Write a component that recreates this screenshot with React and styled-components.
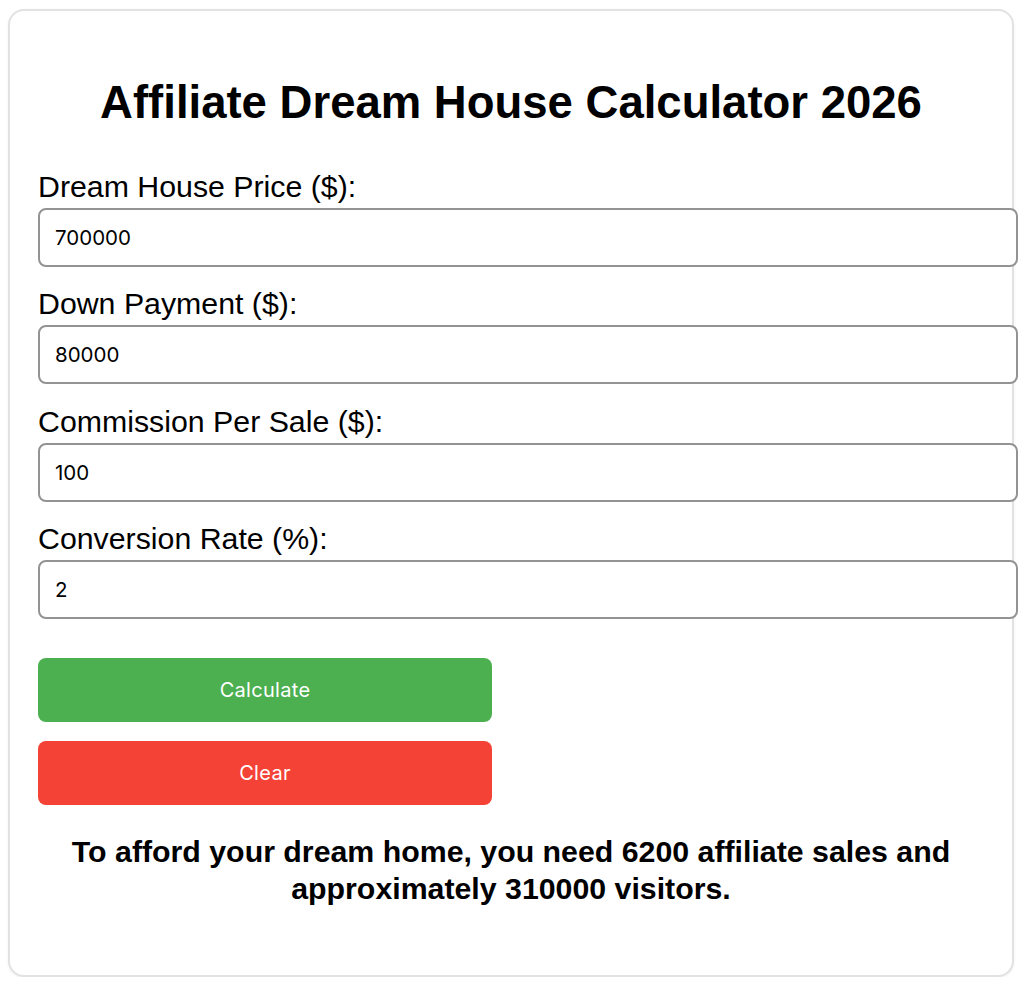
import React, { useState } from "react";
import styled, { createGlobalStyle } from "styled-components";

const Global = createGlobalStyle`
  html, body { margin: 0; padding: 0; background: #ffffff; }
  body { padding: 9px 0 0 8px; font-family: "Liberation Sans", Arial, sans-serif; color: #000; }
  * { box-sizing: border-box; }
`;

const Card = styled.div`
  width: 1006px;
  height: 968px;
  border: 2px solid #e2e2e2;
  border-radius: 16px;
  box-shadow: 0 1px 3px rgba(0, 0, 0, 0.06);
  padding: 28px 28px 30px;
  display: flex;
  flex-direction: column;
  background: #fff;
`;

const Title = styled.h1`
  margin: 38px 0 41px;
  font-family: "Liberation Sans", Arial, sans-serif;
  font-weight: 700;
  font-size: 45.5px;
  line-height: 52px;
  text-align: center;
`;

const Field = styled.div`
  display: flex;
  flex-direction: column;
  margin-bottom: 20.3px;
`;

const Label = styled.label`
  font-family: "Liberation Sans", Arial, sans-serif;
  font-size: 30.3px;
  line-height: 34px;
  margin-bottom: 4px;
`;

const Input = styled.input`
  box-sizing: content-box;
  width: 100%;
  height: 55px;
  padding: 0 15px;
  border: 2px solid #939393;
  border-radius: 8px;
  font-family: "Inter", "Noto Sans", sans-serif;
  font-size: 20.5px;
  color: #000;
  background: #fff;
  outline: none;
`;

const Button = styled.button`
  width: 454px;
  height: 64px;
  border: none;
  border-radius: 8px;
  background: ${(p) => (p.$variant === "clear" ? "#f44336" : "#4caf50")};
  color: #fff;
  font-family: "Inter", "Noto Sans", sans-serif;
  font-size: 20px;
  letter-spacing: 0.3px;
  cursor: pointer;
  margin-top: ${(p) => p.$mt}px;
`;

const Result = styled.p`
  margin: 28px 0 0;
  font-family: "Liberation Sans", Arial, sans-serif;
  font-weight: 700;
  font-size: 30.3px;
  line-height: 37px;
  text-align: center;
`;

const fields = [
  { key: "price", label: "Dream House Price ($):" },
  { key: "down", label: "Down Payment ($):" },
  { key: "commission", label: "Commission Per Sale ($):" },
  { key: "rate", label: "Conversion Rate (%):" },
];

export default function App() {
  const initial = { price: "700000", down: "80000", commission: "100", rate: "2" };
  const [values, setValues] = useState(initial);
  const [result, setResult] = useState(
    "To afford your dream home, you need 6200 affiliate sales and approximately 310000 visitors."
  );

  const calculate = () => {
    const price = parseFloat(values.price) || 0;
    const down = parseFloat(values.down) || 0;
    const comm = parseFloat(values.commission) || 0;
    const rate = parseFloat(values.rate) || 0;
    if (comm <= 0 || rate <= 0) {
      setResult("Please enter valid values.");
      return;
    }
    const sales = Math.ceil((price - down) / comm);
    const visitors = Math.ceil(sales / (rate / 100));
    setResult(
      `To afford your dream home, you need ${sales} affiliate sales and approximately ${visitors} visitors.`
    );
  };

  const clear = () => {
    setValues({ price: "", down: "", commission: "", rate: "" });
    setResult("");
  };

  return (
    <>
      <Global />
      <Card>
        <Title>Affiliate Dream House Calculator 2026</Title>
        {fields.map((f) => (
          <Field key={f.key}>
            <Label htmlFor={f.key}>{f.label}</Label>
            <Input
              id={f.key}
              type="text"
              value={values[f.key]}
              onChange={(e) => setValues({ ...values, [f.key]: e.target.value })}
            />
          </Field>
        ))}
        <Button $mt={19} onClick={calculate}>Calculate</Button>
        <Button $mt={19} $variant="clear" onClick={clear}>Clear</Button>
        <Result>{result}</Result>
      </Card>
    </>
  );
}
